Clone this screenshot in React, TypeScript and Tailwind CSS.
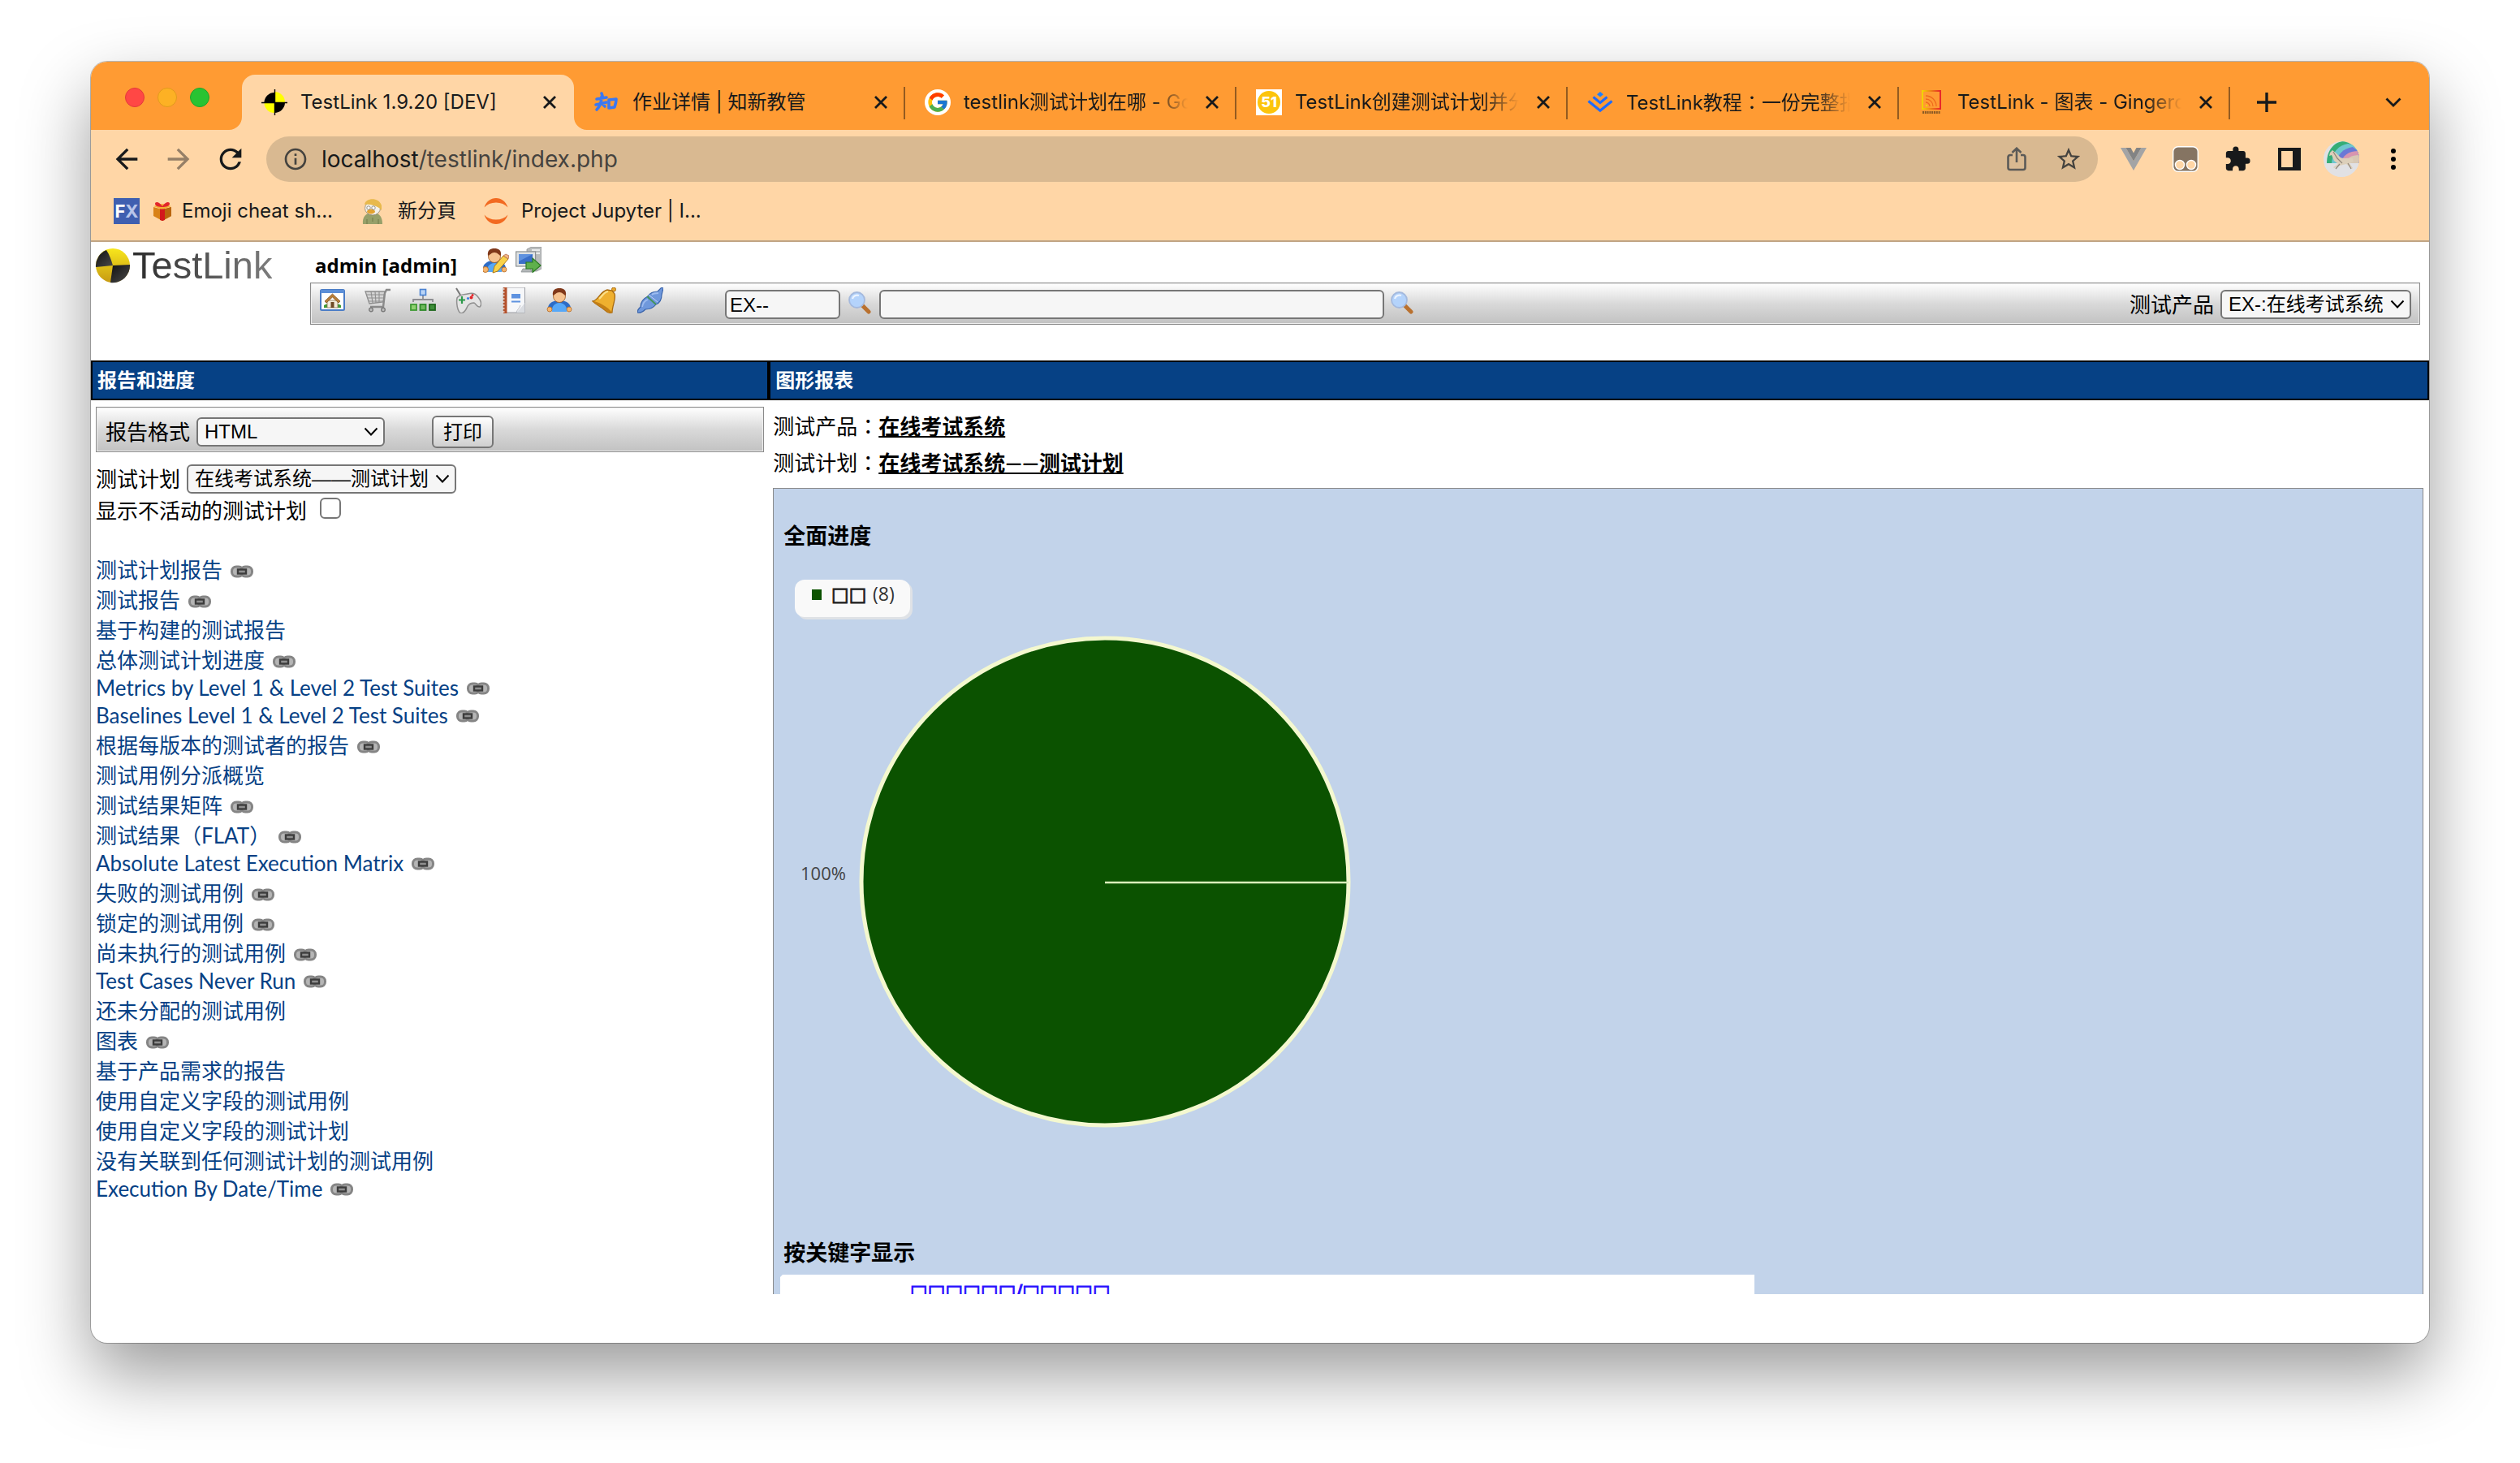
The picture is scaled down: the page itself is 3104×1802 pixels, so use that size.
import React from "react";
import { FcGoogle } from "react-icons/fc";
import {
  MdArrowBack,
  MdArrowForward,
  MdExtension,
  MdInfoOutline,
  MdRefresh,
  MdStarBorder,
} from "react-icons/md";

/* ---------- favicons ---------- */

function TestLinkFavicon() {
  return (
    <svg viewBox="0 0 32 32" className="size-8 shrink-0" aria-hidden="true">
      <path d="M16 16V4A12.500 12.500 0 0 0 3.500 16z" fill="#000" />
      <path d="M16 16V3A13 13 0 0 1 29 16z" fill="#ff0" />
      <path d="M16 16H3.500A12.500 12.500 0 0 0 16 29z" fill="#ff0" />
      <path d="M16 16H29A13 13 0 0 1 16 29z" fill="#000" />
      <path d="M16.500 0V32M0 16.500H32" stroke="#000" strokeWidth="1.400" />
    </svg>
  );
}

function ZhixinFavicon() {
  return (
    <svg viewBox="0 0 32 32" className="size-8 shrink-0" fill="none" stroke="#3b78f2" strokeWidth="3.600" strokeLinecap="round" strokeLinejoin="round" aria-hidden="true">
      <path d="M10 5l1 3M4 12l12-2M10 9c0 7-2 12-6 16M3 19l13-3M11 18l3 3" />
      <path d="M19 13l9-1c0 4-1 7-2 10l-7 1z" />
    </svg>
  );
}

function GoogleFavicon() {
  return (
    <span className="flex size-8 shrink-0 items-center justify-center rounded-full bg-white">
      <FcGoogle className="size-7" aria-hidden="true" />
    </span>
  );
}

function FiftyOneFavicon() {
  return (
    <span className="flex size-8 shrink-0 items-center justify-center bg-white" aria-hidden="true">
      <span className="flex size-7 items-center justify-center rounded-full bg-[#fcc40c] text-[18px] font-extrabold leading-none text-white">
        51
      </span>
    </span>
  );
}

function JuejinFavicon() {
  return (
    <svg viewBox="0 0 32 32" className="size-8 shrink-0" aria-hidden="true">
      <path d="M16 3l4 3.200-4 3.300-4-3.300z" fill="#1e80ff" />
      <path d="M7.500 9.500L16 16.500l8.500-7" fill="none" stroke="#1e6bff" strokeWidth="3" />
      <path d="M1.500 14.500L16 26.300l14.500-11.800" fill="none" stroke="#1e6bff" strokeWidth="3.200" />
    </svg>
  );
}

function GingerdocFavicon() {
  return (
    <svg viewBox="0 0 32 32" className="size-8 shrink-0" aria-hidden="true">
      <defs>
        <linearGradient id="ginger" x1="0" y1="0" x2="1" y2="0">
          <stop offset="0" stopColor="#f2d400" />
          <stop offset="1" stopColor="#e8262a" />
        </linearGradient>
      </defs>
      <rect x="5" y="2" width="22" height="22" fill="none" stroke="url(#ginger)" strokeWidth="2" />
      <path d="M9 8a13 13 0 0 1 13 13M9 12a9 9 0 0 1 9 9M9 16a5 5 0 0 1 5 5" fill="none" stroke="#ef6a1c" strokeWidth="1.300" />
      <circle cx="10" cy="20" r="1.300" fill="#f2d400" />
      <path d="M5 28.500h22" stroke="#8a5a24" strokeWidth="3" strokeDasharray="2 .8" />
    </svg>
  );
}

/* ---------- browser chrome ---------- */

const tabs = [
  { title: "TestLink 1.9.20 [DEV]", Icon: TestLinkFavicon, active: true },
  { title: "作业详情 | 知新教管", Icon: ZhixinFavicon },
  { title: "testlink测试计划在哪 - Go", Icon: GoogleFavicon, faded: true },
  { title: "TestLink创建测试计划并分", Icon: FiftyOneFavicon, faded: true },
  { title: "TestLink教程：一份完整指", Icon: JuejinFavicon, faded: true },
  { title: "TestLink - 图表 - Gingerd", Icon: GingerdocFavicon, faded: true },
];

function CloseIcon() {
  return (
    <svg viewBox="0 0 16 16" className="size-4" aria-hidden="true">
      <path d="M1 1l14 14M15 1L1 15" stroke="#17191b" strokeWidth="2.800" />
    </svg>
  );
}

function TabStrip() {
  return (
    <div className="flex h-[84px] items-end bg-[#ff9b33]">
      <div className="flex w-[186px] shrink-0 gap-4 self-stretch pt-8 pl-[42px]">
        <button aria-label="Close window" className="size-6 rounded-full border border-[#e2393a] bg-[#ff4745]" />
        <button aria-label="Minimise window" className="size-6 rounded-full border border-[#e29a1d] bg-[#fdb124]" />
        <button aria-label="Zoom window" className="size-6 rounded-full border border-[#1fa52a] bg-[#28c332]" />
      </div>
      {tabs.map(({ title, Icon, active, faded }, i) => (
        <div
          key={title}
          className={
            active
              ? "relative flex h-[68px] w-[409px] min-w-0 items-center rounded-t-2xl bg-[#ffd6a6] pl-6"
              : "relative flex h-[68px] w-[408px] min-w-0 items-center pl-6"
          }
        >
          {active && (
            <>
              <svg viewBox="0 0 16 16" className="absolute bottom-0 -left-4 size-4" aria-hidden="true">
                <path d="M16 0v16H0A16 16 0 0 0 16 0z" fill="#ffd6a6" />
              </svg>
              <svg viewBox="0 0 16 16" className="absolute -right-4 bottom-0 size-4" aria-hidden="true">
                <path d="M0 0v16h16A16 16 0 0 1 0 0z" fill="#ffd6a6" />
              </svg>
            </>
          )}
          <Icon />
          <a
            href="#"
            className={
              faded
                ? "ml-4 min-w-0 flex-1 text-[24px] leading-8 whitespace-nowrap text-[#17191b] [mask-image:linear-gradient(to_right,black_84%,transparent)]"
                : "ml-4 min-w-0 flex-1 text-[24px] leading-8 whitespace-nowrap text-[#17191b]"
            }
          >
            {title.split("：").map((part, n) => (
              <React.Fragment key={part}>
                {n > 0 && <span className="font-['Noto_Sans_CJK_TC',sans-serif]">：</span>}
                {part}
              </React.Fragment>
            ))}
          </a>
          <button aria-label={"关闭 " + title} className="flex h-8 w-[60px] shrink-0 items-center justify-center">
            <CloseIcon />
          </button>
          {i > 0 && <span className="absolute top-[15px] right-0 h-10 w-0.5 bg-[#945b20]" />}
        </div>
      ))}
      <button aria-label="New tab" className="ml-[31px] flex h-[68px] w-7 items-center justify-center">
        <svg viewBox="0 0 24 24" className="size-6" aria-hidden="true">
          <path d="M12 0v24M0 12h24" stroke="#17191b" strokeWidth="3.400" />
        </svg>
      </button>
      <button aria-label="Search tabs" className="mr-[34px] ml-auto flex h-[68px] w-5 items-center justify-center">
        <svg viewBox="0 0 20 12" className="h-3 w-5" aria-hidden="true">
          <path d="M1.500 1.500L10 10l8.500-8.500" fill="none" stroke="#17191b" strokeWidth="2.800" />
        </svg>
      </button>
    </div>
  );
}

function AddressRow() {
  return (
    <div className="flex h-[72px] items-center bg-[#ffd6a6] pr-[38px] pl-6 text-[#17191b]">
      <button aria-label="Back" className="w-16">
        <MdArrowBack className="size-10" />
      </button>
      <button aria-label="Forward" className="w-16 text-[#957f67]">
        <MdArrowForward className="size-10" />
      </button>
      <button aria-label="Reload" className="w-16">
        <MdRefresh className="size-10" />
      </button>
      <div className="flex h-14 flex-1 items-center rounded-full bg-[#d9b991] pr-[19px] pl-5 text-[#45433f]">
        <MdInfoOutline className="size-8 shrink-0" aria-hidden="true" />
        <a href="#" className="ml-4 flex-1 text-[28px] leading-9">
          <span className="text-[#17191b]">localhost</span>/testlink/index.php
        </a>
        <button aria-label="Share" className="mr-[35px]">
          <svg viewBox="0 0 24 30" className="h-[30px] w-6" fill="none" stroke="#5b5a57" strokeWidth="2.600" aria-hidden="true">
            <path d="M7 10H4a2.500 2.500 0 0 0-2.500 2.500v13A2.500 2.500 0 0 0 4 28h16a2.500 2.500 0 0 0 2.500-2.500v-13A2.500 2.500 0 0 0 20 10h-3M12 19V2M6.500 7L12 1.700 17.500 7" />
          </svg>
        </button>
        <button aria-label="Bookmark">
          <MdStarBorder className="size-[34px]" />
        </button>
      </div>
      <button aria-label="Vue devtools" className="ml-7">
        <svg viewBox="0 0 32 28" className="h-7 w-8" aria-hidden="true">
          <path d="M0 0h6.500L16 16.500 25.500 0H32L16 28z" fill="#a3a4a5" />
          <path d="M6.500 0h6L16 6.500 19.500 0h6L16 16.500z" fill="#828384" />
        </svg>
      </button>
      <button aria-label="Tampermonkey" className="ml-8">
        <svg viewBox="0 0 32 32" className="size-8" aria-hidden="true">
          <rect x=".7" y=".7" width="30.600" height="30.600" rx="6" fill="#857462" stroke="#fff" strokeWidth="1.400" />
          <circle cx="9" cy="23" r="5.500" fill="#ffd6a6" stroke="#fff" strokeWidth="1.400" />
          <circle cx="23" cy="23" r="5.500" fill="#ffd6a6" stroke="#fff" strokeWidth="1.400" />
        </svg>
      </button>
      <button aria-label="Extensions" className="ml-[31px]">
        <MdExtension className="size-[34px]" />
      </button>
      <button aria-label="Side panel" className="ml-[33px]">
        <svg viewBox="0 0 28 28" className="size-7" aria-hidden="true">
          <path d="M0 0h28v28H0zM4 4v20h14V4z" fill="#17191b" fillRule="evenodd" />
        </svg>
      </button>
      <button aria-label="Profile" className="ml-7">
        <svg viewBox="0 0 44 44" className="size-11" aria-hidden="true">
          <defs>
            <clipPath id="avatar">
              <circle cx="22" cy="22" r="22" />
            </clipPath>
          </defs>
          <g clipPath="url(#avatar)">
            <path d="M0 0h44v44H0z" fill="#e1e1e4" />
            <path d="M4 27C4 10 14 0 26 0h18v27z" fill="#35ad77" />
            <path d="M10 27C11 12 19 5 30 3l14 3v21z" fill="#6fc6cf" />
            <path d="M16 27c1-11 8-18 20-20l8 6v14z" fill="#6a78d6" />
            <path d="M22 27c1-9 8-15 22-15v15z" fill="#d795b0" />
            <path d="M28 27c0-6 6-10 16-10v10z" fill="#d8c8b4" />
            <path d="M0 27h44v17H0z" fill="#e1e1e4" />
            <path d="M8 14l3-3 5 4 5 5c4 2 10 0 15 1l1 4-5 2 4 6-1 1-7-6-8 2-7 3-1-1 6-4-5-4-3-7-3 1z" fill="#dccfba" />
            <path d="M12 13l5 8 6 6M20 28l-5 6M30 27l4 7" fill="none" stroke="#91877c" strokeWidth="1.200" />
          </g>
        </svg>
      </button>
      <button aria-label="Menu" className="ml-9">
        <svg viewBox="0 0 12 28" className="h-7 w-3" aria-hidden="true">
          <circle cx="6" cy="4" r="3" />
          <circle cx="6" cy="14" r="3" />
          <circle cx="6" cy="24" r="3" />
        </svg>
      </button>
    </div>
  );
}

function BookmarkBar() {
  return (
    <div className="flex h-[66px] items-center border-b-2 border-[#c0a584] bg-[#ffd6a6] pb-2 pl-7 text-[24px] leading-8 text-[#17191b]">
      <a href="#" className="flex items-center">
        <span className="flex size-8 items-center justify-center bg-[#3f5fb0] text-[22px] font-bold text-white">
          F<span className="text-[#b9c6ea]">X</span>
        </span>
        <svg viewBox="0 0 24 24" className="ml-4 size-6" aria-hidden="true">
          <path d="M1 7l11 3 11-3v11l-11 6-11-6z" fill="#d98218" />
          <path d="M12 10l11-3v11l-11 6z" fill="#b9650e" />
          <path d="M1 6l11-3 11 3-11 4z" fill="#f4ae33" />
          <path d="M9 9.500l6 0V23l-3 1-3-1z" fill="#d3181c" />
          <path d="M12 6C8 0 3 0 3 3s5 4 9 4 9-1 9-4-5-3-9 3z" fill="#e3262b" />
        </svg>
        <span className="ml-3">Emoji cheat sh...</span>
      </a>
      <a href="#" className="ml-[33px] flex items-center">
        <svg viewBox="0 0 32 32" className="size-8" aria-hidden="true">
          <path d="M4 32C3 24 7 18 16 18s12 6 12 14z" fill="#97a069" />
          <ellipse cx="16" cy="12.500" rx="9.500" ry="8.500" fill="#f4f1ea" stroke="#8b8370" strokeWidth=".8" />
          <path d="M6 8c1-8 17-10 21 1v6c-3-4-12-8-21-7z" fill="#e8b94c" />
          <ellipse cx="14" cy="16.500" rx="5" ry="3" fill="#e2a331" />
          <circle cx="11" cy="12" r="2.200" fill="#fff" stroke="#6b675c" strokeWidth=".7" />
          <circle cx="17" cy="12" r="2.200" fill="#fff" stroke="#6b675c" strokeWidth=".7" />
          <path d="M9 26v6M16 24v5M23 26v6" stroke="#78814f" strokeWidth="1.200" />
        </svg>
        <span className="ml-[15px]">新分頁</span>
      </a>
      <a href="#" className="ml-[33px] flex items-center">
        <svg viewBox="0 0 32 32" className="size-8" aria-hidden="true">
          <path d="M1.500 11.500C4 4 9.500 0 16 0s12 4 14.500 11.500C27 7.500 22 5.500 16 5.500S5 7.500 1.500 11.500z" fill="#f26a21" />
          <path d="M1.500 20.500C4 28 9.500 32 16 32s12-4 14.500-11.500C27 24.500 22 26.500 16 26.500S5 24.500 1.500 20.500z" fill="#f26a21" />
        </svg>
        <span className="ml-[15px]">Project Jupyter | I...</span>
      </a>
    </div>
  );
}

/* ---------- TestLink toolbar icons ---------- */

function UserFigure() {
  return (
    <>
      <path d="M2 28c-1-7 4-12 14-12s15 5 14 12c-3 2-6 0-7-2H9c-1 2-4 4-7 2z" fill="#2d6cc6" />
      <path d="M7 30c-1-6 3-11 9-11s10 5 9 11z" fill="#57a8f7" />
      <circle cx="16" cy="11" r="7.500" fill="#f6c391" stroke="#9c5a22" strokeWidth=".8" />
      <path d="M8 10C7 3 11 1 16 1s9 2 8 9c-3-1-4-4-8-4s-5 3-8 4z" fill="#80381a" />
      <circle cx="4" cy="27" r="3" fill="#f5b56e" stroke="#b56b24" strokeWidth=".8" />
      <circle cx="28" cy="27" r="3" fill="#f5b56e" stroke="#b56b24" strokeWidth=".8" />
    </>
  );
}

function UserIcon() {
  return (
    <svg viewBox="0 0 32 32" className="size-8" aria-hidden="true">
      <UserFigure />
    </svg>
  );
}

function UserEditIcon() {
  return (
    <svg viewBox="0 0 32 32" className="size-8" aria-hidden="true">
      <g transform="translate(-2 0)">
        <UserFigure />
      </g>
      <path d="M12 31l2-8L25 10l6 4-13 15z" fill="#f8d24a" stroke="#b07a17" strokeWidth="1" />
      <path d="M25 10l6 4 1-4-4-2z" fill="#f3b986" stroke="#b56b4c" strokeWidth=".8" />
      <circle cx="3" cy="27" r="3.500" fill="#f5b56e" stroke="#b56b24" strokeWidth=".8" />
    </svg>
  );
}

function LogoutIcon() {
  return (
    <svg viewBox="0 0 32 32" className="size-8" aria-hidden="true">
      <path d="M14 3l6-3h12v27l-6 3H14z" fill="#b9bcbd" stroke="#8d9192" strokeWidth=".8" />
      <path d="M20 4h10M20 8h10" stroke="#e9ebeb" strokeWidth="2" />
      <rect x=".6" y="6" width="24" height="18" fill="#dfe2e3" stroke="#8b9092" strokeWidth="1.200" />
      <rect x="4" y="9" width="17" height="12" fill="#3a6fc9" />
      <path d="M4 9h17l-17 9z" fill="#5f92df" />
      <path d="M7 31l2-4h9l2 4z" fill="#b4b8b9" stroke="#8b9092" strokeWidth=".8" />
      <path d="M13 19h8v-5l10 9-10 8.500V27h-8z" fill="#5fb04c" stroke="#2c7a24" strokeWidth="1.200" />
    </svg>
  );
}

function HomeIcon() {
  return (
    <svg viewBox="0 0 32 32" className="size-8" aria-hidden="true">
      <rect x="2" y="3" width="29" height="25" rx="1.500" fill="#fff" stroke="#4a7cc6" strokeWidth="2" />
      <path d="M2 3h29v4H2z" fill="#5c8fd8" />
      <path d="M6 22c4-3 17-3 21 0v3H6z" fill="#3f9a33" />
      <path d="M10 16h13v9H10z" fill="#f3ead8" stroke="#8a7350" strokeWidth=".8" />
      <path d="M7 17l9.500-9 9.500 9-2 2-7.500-7-7.500 7z" fill="#b97f3a" stroke="#855722" strokeWidth=".8" />
      <path d="M14.500 18h4v7h-4z" fill="#6f4a26" />
    </svg>
  );
}

function CartIcon() {
  return (
    <svg viewBox="0 0 32 32" className="size-8" fill="none" aria-hidden="true">
      <path d="M1 5h24l-2 13-17 2z" fill="#d4d4d4" stroke="#8c8c8c" strokeWidth="1.300" />
      <path d="M3 9h21M4 13h20M5 17h18M8 5l2 14M13 5l1 14M18 5v13" stroke="#8f8f8f" strokeWidth="1.100" />
      <path d="M32 3h-5l-2 4-2 17H7" stroke="#8a8a8a" strokeWidth="2.400" />
      <circle cx="8" cy="27.500" r="2.300" fill="#bbb" stroke="#777" strokeWidth="1.300" />
      <circle cx="23" cy="27.500" r="2.300" fill="#bbb" stroke="#777" strokeWidth="1.300" />
    </svg>
  );
}

function TreeIcon() {
  return (
    <svg viewBox="0 0 32 32" className="size-8" aria-hidden="true">
      <path d="M16 9v6M4 18v-3h24v3" fill="none" stroke="#8e8e92" strokeWidth="1.800" />
      <rect x="12.500" y="2.500" width="7" height="7" fill="#b9d4f6" stroke="#4a82d2" strokeWidth="1.600" />
      <rect x="1" y="21" width="7" height="7" fill="#8fd070" stroke="#3f9a33" strokeWidth="1.800" />
      <rect x="12.500" y="21" width="7" height="7" fill="#6fb95c" stroke="#2f8a2a" strokeWidth="1.800" />
      <rect x="24" y="21" width="7" height="7" fill="#3f8f3a" stroke="#1d661b" strokeWidth="1.800" />
    </svg>
  );
}

function GamepadIcon() {
  return (
    <svg viewBox="0 0 32 32" className="size-8" aria-hidden="true">
      <path d="M1 1l6 10" fill="none" stroke="#777" strokeWidth="2" />
      <path d="M2 13c3-5 10-4 13-5s9-2 13 4c3 4 5 9 2 12-3 1-4-3-7-5-3 0-6 1-8 4-2 4-3 8-8 9-5-2-6-14-5-19z" fill="#e4e4e4" stroke="#8f8f8f" strokeWidth="1.500" />
      <path d="M8 11v9M4 15.500h8" stroke="#2c9a4a" strokeWidth="2.200" />
      <circle cx="19.500" cy="12.500" r="2" fill="#e2262b" />
      <circle cx="15.500" cy="13.500" r="1.600" fill="#3d7fe0" />
      <circle cx="21" cy="9.500" r="1.500" fill="#e2262b" />
    </svg>
  );
}

function BookIcon() {
  return (
    <svg viewBox="0 0 32 32" className="size-8" aria-hidden="true">
      <path d="M3 0h26.500v31H3z" fill="#f6f7f9" stroke="#9a9ca2" strokeWidth="1" />
      <path d="M3 0h4.500v32H3z" fill="#b4512c" />
      <path d="M1.500 2h3M1.500 6h3M1.500 10h3M1.500 14h3M1.500 18h3M1.500 22h3M1.500 26h3M1.500 30h3" stroke="#e7dcd6" strokeWidth="1.600" />
      <rect x="13" y="8" width="11" height="5.500" fill="#5e92e0" />
      <path d="M13 17.500h11" stroke="#5e92e0" strokeWidth="2" />
      <path d="M19 31c3-3 7-7 10.500-12v12z" fill="#d9dce1" />
      <path d="M19 31c1-4 4-5 5-9" fill="none" stroke="#b9bcc2" strokeWidth="1" />
    </svg>
  );
}

function BellIcon() {
  return (
    <svg viewBox="0 0 32 32" className="size-8" aria-hidden="true">
      <circle cx="27" cy="2.500" r="2.500" fill="#e9a92c" stroke="#a86a10" strokeWidth="1" />
      <path d="M1 17c7-1 9-12 18-14l6 1 3 4c2 7-3 14-3 23-3 1-6 0-9-3-4-4-10-6-15-11z" fill="#efb02f" stroke="#a86a10" strokeWidth="1.300" />
      <path d="M1 17c6 0 19 7 24 14-3 1-6 0-9-3-4-4-10-6-15-11z" fill="#c47f16" />
      <path d="M9 14c4-3 5-8 11-9" fill="none" stroke="#fbdf8a" strokeWidth="2.200" />
    </svg>
  );
}

function PlugIcon() {
  return (
    <svg viewBox="0 0 32 32" className="size-8" aria-hidden="true">
      <path d="M0 31c0-4 2-5 4-7 0-8 5-11 9-13 3-5 8-6 12-6l5-5 2 1-2 8c0 6-2 10-7 12-4 5-8 6-13 6-3 3-6 5-10 4z" fill="#6f98dc" stroke="#3a64ab" strokeWidth="1.200" />
      <path d="M12 11l11 10" stroke="#45955b" strokeWidth="2" />
      <path d="M14 9l11 9" stroke="#c3d6f6" strokeWidth="1" />
      <path d="M6 24c1-5 4-8 7-9M18 9c2-2 5-2 8-2" fill="none" stroke="#9dbcf0" strokeWidth="1.800" />
    </svg>
  );
}

function MagnifierIcon() {
  return (
    <svg viewBox="0 0 28 28" className="size-7" aria-hidden="true">
      <path d="M17 17l8 8" stroke="#b9712f" strokeWidth="5" strokeLinecap="round" />
      <circle cx="10.500" cy="10.500" r="9.500" fill="#b4d3fb" stroke="#a4b9dd" strokeWidth="1.800" />
      <path d="M5 9c1-4 5-5 8-4" fill="none" stroke="#eaf3ff" strokeWidth="2.200" />
    </svg>
  );
}

function ChainIcon() {
  return (
    <svg viewBox="0 0 28 16" className="h-4 w-7" aria-hidden="true">
      <rect x="1.500" y="2" width="14" height="12" rx="5.500" fill="#b5b5b5" stroke="#858585" strokeWidth="3" />
      <rect x="12.500" y="2" width="14" height="12" rx="5.500" fill="#b5b5b5" stroke="#858585" strokeWidth="3" />
      <rect x="9" y="5.500" width="10" height="5" fill="#8f8f8f" stroke="#3c3c3c" strokeWidth="2.400" />
    </svg>
  );
}

/* ---------- form pieces ---------- */

function Select({ id, value, className }: { id: string; value: string; className: string }) {
  return (
    <span className={"relative inline-flex " + className}>
      <select
        id={id}
        defaultValue={value}
        className="h-9 w-full appearance-none rounded-md border-2 border-[#767676] bg-[#f6f6f6] pl-2 font-['Liberation_Sans','Noto_Sans_CJK_SC',sans-serif] text-[24px] leading-8 text-black"
      >
        <option>{value}</option>
      </select>
      <svg viewBox="0 0 18 12" className="pointer-events-none absolute top-3 right-2 h-3 w-[18px]" aria-hidden="true">
        <path d="M1.500 1.500L9 9.500l7.500-8" fill="none" stroke="#000" strokeWidth="2" />
      </svg>
    </span>
  );
}

/* ---------- page header ---------- */

const toolbarIcons = [
  { label: "桌面", Icon: HomeIcon },
  { label: "用例", Icon: CartIcon },
  { label: "产品需求", Icon: TreeIcon },
  { label: "执行", Icon: GamepadIcon },
  { label: "报告", Icon: BookIcon },
  { label: "用户", Icon: UserIcon },
  { label: "事件", Icon: BellIcon },
  { label: "插件", Icon: PlugIcon },
];

function PageHeader() {
  return (
    <header className="flex h-[146px] shrink-0 items-start">
      <div className="flex w-[270px] shrink-0 items-center pt-1 pl-[5px]">
        <svg viewBox="0 0 44 44" className="size-11 shrink-0" aria-hidden="true">
          <defs>
            <linearGradient id="ballYellow" x1="0" y1="0" x2="0" y2="1">
              <stop offset="0" stopColor="#f8e71c" />
              <stop offset="1" stopColor="#c79a12" />
            </linearGradient>
            <linearGradient id="ballBlack" x1="0" y1="0" x2="1" y2="1">
              <stop offset="0" stopColor="#111" />
              <stop offset="1" stopColor="#4a4a4a" />
            </linearGradient>
          </defs>
          <circle cx="22" cy="22" r="21" fill="url(#ballYellow)" />
          <path d="M22 22L19 43A21 21 0 0 0 43 21z" fill="url(#ballBlack)" />
          <path d="M22 22L1 24A21 21 0 0 1 14 3C18 9 20 15 22 22z" fill="url(#ballBlack)" />
        </svg>
        <span className="ml-0.5 bg-linear-to-r from-[#2c2c2c] to-[#7d7d7d] bg-clip-text font-['Liberation_Sans',sans-serif] text-[47px] leading-[50px] text-transparent">
          TestLink
        </span>
      </div>
      <div className="mr-[11px] min-w-0 flex-1">
        <div className="flex h-[50px] items-center gap-2 pl-1.5">
          <span className="mt-1.5 mr-6 font-['Open_Sans',sans-serif] text-[24px] font-bold">admin [admin]</span>
          <a href="#" aria-label="个人账号" className="mb-1"><UserEditIcon /></a>
          <a href="#" aria-label="退出" className="mb-1.5"><LogoutIcon /></a>
        </div>
        <div className="flex h-[52px] items-center border border-[#8a8a8a] bg-linear-to-b from-white via-[#d9d9d9] to-[#c2c2c2] px-2.5 pt-0.5 shadow-[inset_-1px_-1px_0_#eee,inset_1px_1px_0_#eee]">
          <nav className="mb-2.5 flex gap-6">
            {toolbarIcons.map(({ label, Icon }) => (
              <a key={label} href="#" aria-label={label}>
                <Icon />
              </a>
            ))}
          </nav>
          <input
            aria-label="用例编号"
            defaultValue="EX--"
            className="ml-[76px] h-9 w-[142px] rounded-md border-2 border-[#767676] bg-[#f6f6f6] px-1 font-['Liberation_Sans',sans-serif] text-[24px]"
          />
          <button aria-label="按编号查找" className="mb-1 ml-2.5"><MagnifierIcon /></button>
          <input
            aria-label="全文查找"
            className="ml-2.5 h-9 w-[622px] rounded-md border-2 border-[#767676] bg-[#f6f6f6] px-1 font-['Liberation_Sans',sans-serif] text-[24px]"
          />
          <button aria-label="查找" className="mb-1 ml-2"><MagnifierIcon /></button>
          <label htmlFor="product" className="mr-2 ml-auto">测试产品</label>
          <Select id="product" value="EX-:在线考试系统" className="w-[235px]" />
        </div>
      </div>
    </header>
  );
}

/* ---------- left frame ---------- */

const reports: { name: string; latin?: boolean; link?: boolean }[] = [
  { name: "测试计划报告", link: true },
  { name: "测试报告", link: true },
  { name: "基于构建的测试报告" },
  { name: "总体测试计划进度", link: true },
  { name: "Metrics by Level 1 & Level 2 Test Suites", latin: true, link: true },
  { name: "Baselines Level 1 & Level 2 Test Suites", latin: true, link: true },
  { name: "根据每版本的测试者的报告", link: true },
  { name: "测试用例分派概览" },
  { name: "测试结果矩阵", link: true },
  { name: "测试结果（FLAT）", link: true },
  { name: "Absolute Latest Execution Matrix", latin: true, link: true },
  { name: "失败的测试用例", link: true },
  { name: "锁定的测试用例", link: true },
  { name: "尚未执行的测试用例", link: true },
  { name: "Test Cases Never Run", latin: true, link: true },
  { name: "还未分配的测试用例" },
  { name: "图表", link: true },
  { name: "基于产品需求的报告" },
  { name: "使用自定义字段的测试用例" },
  { name: "使用自定义字段的测试计划" },
  { name: "没有关联到任何测试计划的测试用例" },
  { name: "Execution By Date/Time", latin: true, link: true },
];

function FrameTitle({ children }: { children: React.ReactNode }) {
  return (
    <h1 className="h-[49px] border-2 border-black bg-[#064185] px-1.5 text-[24px] leading-[44px] font-bold text-white">
      {children}
    </h1>
  );
}

function NavigatorFrame() {
  return (
    <section className="w-[29%] shrink-0 overflow-hidden">
      <FrameTitle>报告和进度</FrameTitle>
      <div className="mx-1.5 mt-2">
        <div className="flex h-14 items-center border border-[#8a8a8a] bg-linear-to-b from-white via-[#d9d9d9] to-[#c2c2c2] pt-1.5 pl-[11px] shadow-[inset_-1px_-1px_0_#eee,inset_1px_1px_0_#eee]">
          <label htmlFor="format">报告格式</label>
          <Select id="format" value="HTML" className="ml-2 w-[232px]" />
          <button className="ml-[58px] h-10 w-[76px] rounded-md border-2 border-[#767676] bg-linear-to-b from-white to-[#cfcfcf] text-[24px] leading-9">
            打印
          </button>
        </div>
        <div className="mt-[15px] flex h-9 items-center">
          <label htmlFor="plan">测试计划</label>
          <Select id="plan" value="在线考试系统——测试计划" className="ml-2 w-[332px]" />
        </div>
        <div className="mt-[3px] flex h-[37px] items-start leading-[37px]">
          <label htmlFor="inactive">显示不活动的测试计划</label>
          <input
            id="inactive"
            type="checkbox"
            className="mt-0.5 ml-4 size-[26px] appearance-none rounded-md border-2 border-[#767676] bg-white"
          />
        </div>
        <ul className="mt-9 text-[#064185]">
          {reports.map(({ name, latin, link }) => (
            <li key={name} className={latin ? "flex h-[34px] items-center pb-1" : "flex h-[37px] items-center"}>
              <a href="#" className="whitespace-nowrap">{name}</a>
              {link && (
                <a href="#" aria-label={name + " 链接"} className="mt-0.5 ml-2.5">
                  <ChainIcon />
                </a>
              )}
            </li>
          ))}
        </ul>
      </div>
    </section>
  );
}

/* ---------- right frame ---------- */

function Field({ label, children }: { label: string; children: React.ReactNode }) {
  return (
    <p className="h-[45px] leading-[45px]">
      {label}
      <span className="font-['Noto_Sans_CJK_TC',sans-serif]">：</span>
      <b className="underline decoration-2 underline-offset-2">{children}</b>
    </p>
  );
}

function OverallChart() {
  return (
    <svg viewBox="0 0 1200 800" className="h-[800px] w-[1200px]" fontFamily="'Open Sans', sans-serif" role="img" aria-label="全面进度">
      <rect x="21" y="30" width="142" height="46" rx="12" fill="#dfe2e6" />
      <rect x="18" y="27" width="142" height="46" rx="12" fill="#f9f9f9" />
      <rect x="39" y="39" width="12" height="13" fill="#0b5200" />
      <text x="63" y="53" fontSize="23" fontFamily="'DejaVu Sans'" fill="#222" stroke="#222" strokeWidth="1">□□</text>
      <text x="114" y="53" fontSize="23" fill="#333">(8)</text>
      <circle cx="400" cy="399" r="300" fill="#0b5200" stroke="#f4f8cf" strokeWidth="5" />
      <path d="M400 400H700" stroke="#dbeebb" strokeWidth="2.500" />
      <text x="25" y="397" fontSize="22" fill="#444">100%</text>
    </svg>
  );
}

function KeywordChart() {
  return (
    <svg viewBox="0 0 1200 800" className="h-[800px] w-[1200px]" role="img" aria-label="按关键字显示">
      <path d="M3 0H1200V800H0V3z" fill="#fff" />
      <text x="160" y="29" fontSize="23" fontFamily="'DejaVu Sans'" fill="#2a10ff" stroke="#2a10ff" strokeWidth="1">□□□□□□/□□□□□</text>
    </svg>
  );
}

function ChartsFrame() {
  return (
    <section className="min-w-0 flex-1 overflow-hidden">
      <FrameTitle>图形报表</FrameTitle>
      <div className="mr-[7px] ml-[5px] pt-2">
        <Field label="测试产品">在线考试系统</Field>
        <Field label="测试计划">在线考试系统——测试计划</Field>
        <div className="mt-2.5 border border-[#8a8a8a] bg-[#c2d3ea] pl-2">
          <h2 className="mt-[38px] mb-[7px] ml-1 text-[27px] leading-10 font-bold">全面进度</h2>
          <OverallChart />
          <h2 className="mt-9 mb-[7px] ml-1 text-[27px] leading-10 font-bold">按关键字显示</h2>
          <KeywordChart />
        </div>
      </div>
    </section>
  );
}

export default function App() {
  return (
    <div className="flex h-screen flex-col overflow-hidden bg-white px-28 pt-[76px] pb-[148px] font-['Inter','Noto_Sans_CJK_SC',sans-serif]">
      <div className="flex min-h-0 flex-1 flex-col overflow-hidden rounded-[20px] bg-white shadow-[0_0_0_1px_rgba(0,0,0,0.25),0_38px_85px_rgba(0,0,0,0.4)]">
        <TabStrip />
        <AddressRow />
        <BookmarkBar />
        <main className="flex min-h-0 flex-1 flex-col pb-[60px] font-['Lato','Noto_Sans_CJK_SC',sans-serif] text-[26px] leading-[37px] text-black">
          <PageHeader />
          <div className="flex min-h-0 flex-1">
            <NavigatorFrame />
            <ChartsFrame />
          </div>
        </main>
      </div>
    </div>
  );
}
